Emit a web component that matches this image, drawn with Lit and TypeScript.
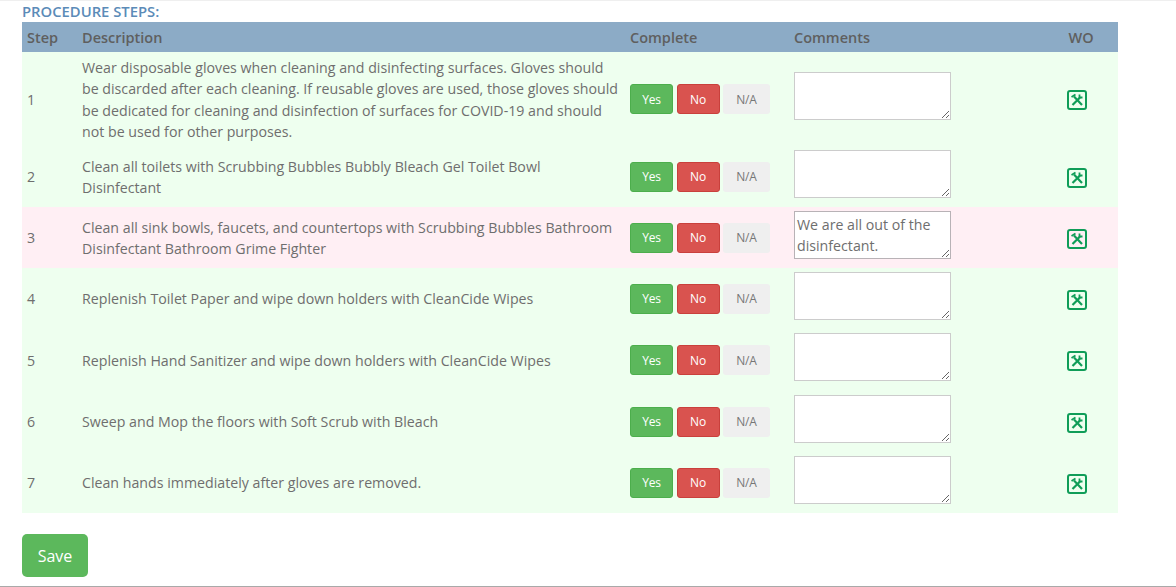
import {LitElement, html, css} from 'lit';
import {customElement} from 'lit/decorators.js';

interface Step {
    id: number;
    lines: string[];
    comment: string;
    flagged: boolean;
    height: number;
}

const steps: Step[] = [
    {id: 1, height: 94, flagged: false, comment: '', lines: [
        'Wear disposable gloves when cleaning and disinfecting surfaces. Gloves should',
        'be discarded after each cleaning. If reusable gloves are used, those gloves should',
        'be dedicated for cleaning and disinfection of surfaces for COVID-19 and should',
        'not be used for other purposes.',
    ]},
    {id: 2, height: 61, flagged: false, comment: '', lines: [
        'Clean all toilets with Scrubbing Bubbles Bubbly Bleach Gel Toilet Bowl',
        'Disinfectant',
    ]},
    {id: 3, height: 61, flagged: true, comment: 'We are all out of the disinfectant.', lines: [
        'Clean all sink bowls, faucets, and countertops with Scrubbing Bubbles Bathroom',
        'Disinfectant Bathroom Grime Fighter',
    ]},
    {id: 4, height: 61, flagged: false, comment: '', lines: ['Replenish Toilet Paper and wipe down holders with CleanCide Wipes']},
    {id: 5, height: 62, flagged: false, comment: '', lines: ['Replenish Hand Sanitizer and wipe down holders with CleanCide Wipes']},
    {id: 6, height: 61, flagged: false, comment: '', lines: ['Sweep and Mop the floors with Soft Scrub with Bleach']},
    {id: 7, height: 61, flagged: false, comment: '', lines: ['Clean hands immediately after gloves are removed.']},
];

@customElement('app-root')
export class AppRoot extends LitElement {
    static styles = css`
        :host {
            display: block;
            height: 587px;
            box-sizing: border-box;
            background: white;
            border-top: 1px solid #efefef;
            border-bottom: 1px solid #a9a9a9;
            padding: 0 58px 0 22px;
            font-family: "Open Sans", "Noto Sans", sans-serif;
            font-size: 14.2px;
            color: #6e6e6e;
            overflow: hidden;
        }

        .title {
            height: 21px;
            line-height: 21px;
            font-size: 14.8px;
            font-weight: 600;
            color: #5b8bb8;
        }

        .row {
            display: grid;
            grid-template-columns: 60px 548px 164px 1fr 78px;
            align-items: center;
            background: #eeffef;
        }

        .row.flagged {
            background: #ffeff4;
        }

        .head {
            height: 30px;
            background: #8cabc6;
            font-size: 14.5px;
            font-weight: 600;
            color: #5f5f5f;
        }

        .step {
            padding-left: 5px;
        }

        .desc {
            margin-top: 1px;
            line-height: 21.3px;
            white-space: nowrap;
        }

        .wo {
            display: flex;
            justify-content: center;
            padding: 2px 4px 0 0;
        }

        .headWo {
            text-align: center;
            padding-left: 4px;
        }

        .buttons {
            display: flex;
            gap: 3.5px;
        }

        .btn {
            box-sizing: border-box;
            height: 30px;
            display: flex;
            align-items: center;
            justify-content: center;
            border-radius: 3px;
            font-size: 12px;
            color: white;
            letter-spacing: -0.2px;
        }

        .yes {
            width: 43px;
            background: #5cb85c;
            border: 1px solid #4cae4c;
        }

        .no {
            width: 43px;
            background: #d9534f;
            border: 1px solid #c9403c;
        }

        .na {
            width: 47px;
            background: #efefef;
            color: #777;
        }

        textarea {
            box-sizing: border-box;
            display: block;
            width: 157px;
            height: 48px;
            margin: 0 0 6px;
            padding: 2px 2px;
            border: 1px solid #ccc;
            background: white;
            font: inherit;
            line-height: 21px;
            color: #6e6e6e;
            overflow: hidden;
        }

        .flagged textarea {
            border-color: #b8b2b6;
        }

        .save {
            margin-top: 21px;
            width: 66px;
            height: 43px;
            display: flex;
            align-items: center;
            justify-content: center;
            background: #5cb85c;
            border: 0;
            border-radius: 5px;
            font: inherit;
            font-size: 16px;
            color: white;
            padding: 0;
        }
    `;

    renderIcon() {
        return html`
            <svg width="20" height="20" viewBox="0 0 20 20" fill="none" stroke="#0f9d58">
                <rect x="1" y="1" width="18" height="18" rx="2" stroke-width="2"></rect>
                <path d="M5.5 15 L13 7.5 M7 6.5 L15 15" stroke-width="2.2"></path>
                <path d="M4.5 7 L8.5 4.5 M12.5 4.5 L12.5 7.5 L15.5 7.5" stroke-width="1.8"></path>
            </svg>
        `;
    }

    renderRow(step: Step) {
        return html`
            <div class="row ${step.flagged ? 'flagged' : ''}" style="height: ${step.height}px">
                <div class="step">${step.id}</div>
                <div class="desc">${step.lines.map(line => html`<div>${line}</div>`)}</div>
                <div class="buttons">
                    <div class="btn yes">Yes</div>
                    <div class="btn no">No</div>
                    <div class="btn na">N/A</div>
                </div>
                <textarea .value=${step.comment}></textarea>
                <div class="wo">${this.renderIcon()}</div>
            </div>
        `;
    }

    render() {
        return html`
            <div class="title">PROCEDURE STEPS:</div>
            <div class="row head">
                <div class="step">Step</div>
                <div>Description</div>
                <div>Complete</div>
                <div>Comments</div>
                <div class="headWo">WO</div>
            </div>
            ${steps.map(step => this.renderRow(step))}
            <button class="save">Save</button>
        `;
    }
}
